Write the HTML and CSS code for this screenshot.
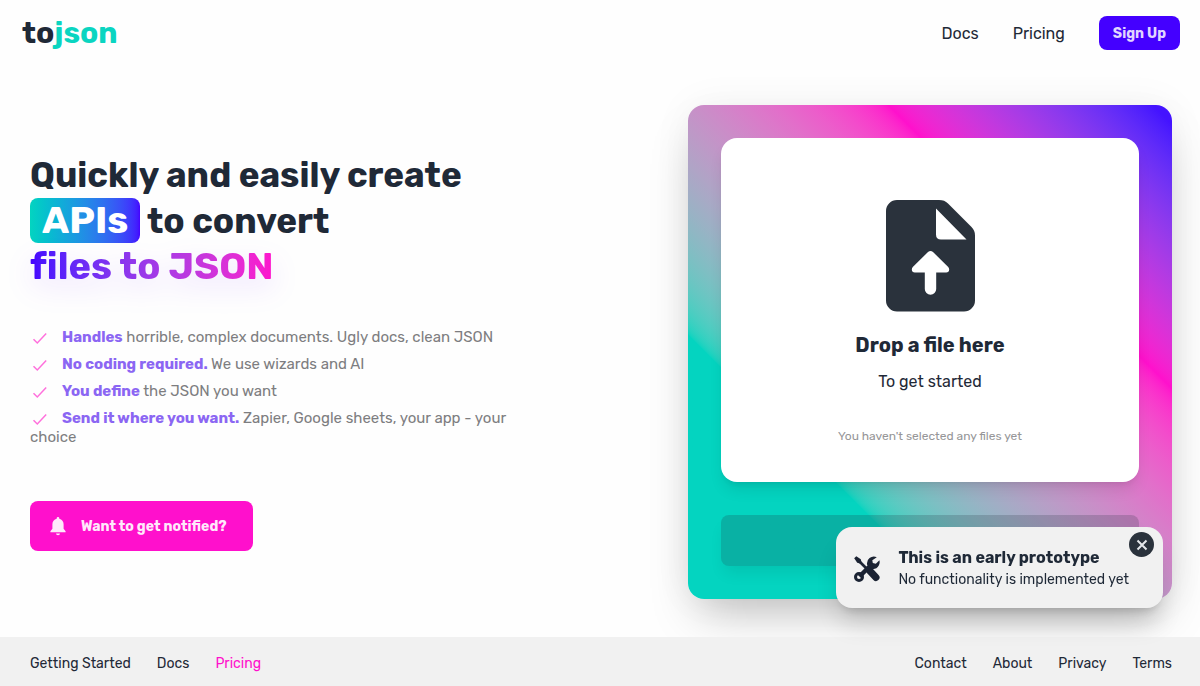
FILE: index.html
```html
<!DOCTYPE html>
<html lang="en">
<head>
<meta charset="utf-8">
<meta name="viewport" content="width=device-width, initial-scale=1">
<title>tojson</title>
<link rel="stylesheet" href="styles.css">
</head>
<body>
<header class="navbar">
  <a class="logo" href="#">to<span class="logo-accent">json</span></a>
  <nav class="nav-links">
    <a href="#">Docs</a>
    <a href="#">Pricing</a>
    <button class="signup" type="button">Sign Up</button>
  </nav>
</header>
<main class="hero">
  <section class="intro">
    <h1 class="headline">Quickly and easily create<br><span class="badge">APIs</span> to convert<br><span class="gradient-text">files to JSON</span></h1>
    <ul class="features">
      <li><svg class="check" viewBox="0 0 16 16"><path d="M1.5 9.2 5.3 13 14.2 3.6"/></svg><strong>Handles</strong> horrible, complex documents. Ugly docs, clean JSON</li>
      <li><svg class="check" viewBox="0 0 16 16"><path d="M1.5 9.2 5.3 13 14.2 3.6"/></svg><strong>No coding required.</strong> We use wizards and AI</li>
      <li><svg class="check" viewBox="0 0 16 16"><path d="M1.5 9.2 5.3 13 14.2 3.6"/></svg><strong>You define</strong> the JSON you want</li>
      <li><svg class="check" viewBox="0 0 16 16"><path d="M1.5 9.2 5.3 13 14.2 3.6"/></svg><strong>Send it where you want.</strong> Zapier, Google sheets, your app - your choice</li>
    </ul>
    <button class="notify" type="button">
      <svg class="bell" viewBox="0 0 16 19"><path d="M8 0c.8 0 1.300.6 1.300 1.300v.5c2.600.6 4.300 2.800 4.300 5.500v4.500l2 2.400v1.100H.4v-1.100l2-2.400V7.300c0-2.700 1.700-4.900 4.300-5.500v-.5C6.700.6 7.200 0 8 0zM6 16.500h4a2 1.800 0 0 1-4 0z"/></svg>
      Want to get notified?
    </button>
  </section>
  <section class="panel">
    <div class="dropzone">
      <svg class="file-icon" viewBox="0 0 89 112"><path fill-rule="evenodd" d="M11 0h42c4 0 6.500 1 9 3.500l23.500 23.500c2.500 2.500 3.500 5 3.500 8.500V100.500a11 11 0 0 1-11 11H11a11 11 0 0 1-11-11V11A11 11 0 0 1 11 0zM50 8.500V34.500q0 5 5 5H80.500zM42 52 26.800 67c-2 2-.8 5.500 2 5.500h10v16.500a5.700 5.700 0 0 0 11.400 0V72.500h10c2.800 0 4-3.500 2-5.500L47 52q-2.500-2.200-5 0z"/></svg>
      <h2 class="drop-title">Drop a file here</h2>
      <p class="drop-sub">To get started</p>
      <p class="drop-status">You haven't selected any files yet</p>
    </div>
    <button class="submit" type="button" disabled aria-label="Convert"></button>
  </section>
</main>
<aside class="toast">
  <svg class="tools" viewBox="0 0 26 26"><path d="M3 3 19 19" stroke-width="2.600"/><path d="M.2 2.300 2.300.2 6.800 3.200 7.400 6 6 7.400 3.200 6.800z" class="solid"/><path d="M15.500 14.500 22 21.500" stroke-width="7" stroke-linecap="round"/><path d="M5.500 20.500 18 8" stroke-width="4.500"/><circle cx="5" cy="21" r="3.500" stroke-width="3"/><path d="M22.800 1.300A6.800 6.800 0 0 0 13.200 9l4 4A7 7 0 0 0 25.400 4.300L21.800 7.700 18.800 7.100 18.300 4.300z" class="solid"/></svg>
  <div>
    <strong class="toast-title">This is an early prototype</strong>
    <p class="toast-text">No functionality is implemented yet</p>
  </div>
  <button class="close" type="button" aria-label="Close"><svg viewBox="0 0 12 12"><path d="M1.500 1.500 10.500 10.500M10.500 1.500 1.500 10.500"/></svg></button>
</aside>
<footer class="footer">
  <nav class="footer-links"><a href="#">Getting Started</a><a href="#">Docs</a><a class="active" href="#">Pricing</a></nav>
  <nav class="footer-links"><a href="#">Contact</a><a href="#">About</a><a href="#">Privacy</a><a href="#">Terms</a></nav>
</footer>
</body>
</html>
```
FILE: styles.css
```css
* { box-sizing: border-box; }
body {
  margin: 0;
  min-height: 100vh;
  display: flex;
  flex-direction: column;
  font-family: Rubik, Roboto, "Liberation Sans", sans-serif;
  font-size: 16px;
  color: #1f2937;
  background: #fefefe;
}
a { color: inherit; text-decoration: none; }
button { font: inherit; border: 0; cursor: pointer; }
h1, h2, p, ul { margin: 0; padding: 0; }

.navbar {
  display: flex;
  align-items: center;
  justify-content: space-between;
  padding: 16px 20px 16px 22px;
}
.logo { font-size: 30px; line-height: 34px; font-weight: 700; }
.logo-accent { color: #0ad5c1; }
.nav-links { display: flex; align-items: center; gap: 34px; font-size: 16px; }
.signup {
  height: 34px;
  padding: 0 14px;
  border-radius: 8px;
  background: #4400ff;
  color: #e0d6ff;
  font-size: 14px;
  font-weight: 700;
}

.hero {
  flex: 1;
  display: grid;
  grid-template-columns: minmax(0, 500px) minmax(0, 484px);
  justify-content: space-between;
  align-items: center;
  padding: 39px 28px 38px 30px;
}
.headline { font-size: 35px; line-height: 45px; font-weight: 700; }
.badge {
  display: inline-block;
  padding: 0 12px;
  border-radius: 8px;
  color: #fff;
  font-size: 38px;
  background: linear-gradient(90deg in oklab, #04d4c0, #4400ff);
}
.gradient-text {
  display: inline-block;
  color: transparent;
  font-size: 38px;
  font-variant-ligatures: none;
  background: linear-gradient(90deg in oklab, #4400ff, #ff10cc);
  background-clip: text;
  -webkit-background-clip: text;
  filter: drop-shadow(0 10px 14px rgba(100, 0, 255, 0.12));
}
.features { margin-top: 38px; list-style: none; font-size: 15px; line-height: 19px; color: #7d7d80; }
.features li { margin-bottom: 8px; }
.features strong { color: #8b66f3; font-weight: 700; }
.check {
  width: 16px;
  height: 16px;
  margin: 0 14px 0 2px;
  vertical-align: -4px;
  fill: none;
  stroke: #ff70dc;
  stroke-width: 1.500;
}
.notify {
  display: flex;
  align-items: center;
  gap: 15px;
  height: 50px;
  margin-top: 54px;
  padding: 0 26px 0 20px;
  border-radius: 8px;
  background: #ff10cc;
  color: #ffe9fb;
  font-size: 14px;
  font-weight: 700;
}
.bell { width: 16px; height: 19px; fill: currentColor; }

.panel {
  display: flex;
  flex-direction: column;
  gap: 33px;
  padding: 33px;
  border-radius: 16px;
  background: linear-gradient(45deg in oklab, #04d4c0 27%, #ff10cc 71%, #4413ff 98%);
  box-shadow: 0 24px 48px -12px rgba(0, 0, 0, 0.25), 0 0 40px rgba(0, 0, 0, 0.05);
}
.dropzone {
  display: flex;
  flex-direction: column;
  align-items: center;
  padding: 62px 24px 38px;
  border-radius: 16px;
  background: #fff;
  box-shadow: 0 10px 15px -3px rgba(0, 0, 0, 0.1), 0 4px 6px -4px rgba(0, 0, 0, 0.1);
}
.file-icon { width: 89px; height: 112px; fill: #2a323c; }
.drop-title { margin-top: 20px; font-size: 20px; line-height: 26px; font-weight: 700; }
.drop-sub { margin-top: 14px; font-size: 16px; line-height: 20px; }
.drop-status { margin-top: 36px; font-size: 12px; line-height: 16px; color: #969698; }
.submit {
  height: 51px;
  border-radius: 8px;
  background: rgba(31, 41, 55, 0.2);
  box-shadow: 0 10px 15px -3px rgba(0, 0, 0, 0.08);
}

.toast {
  position: fixed;
  z-index: 2;
  right: 37px;
  bottom: 78px;
  display: flex;
  align-items: center;
  gap: 18px;
  padding: 20px 34px 18px 18px;
  border-radius: 16px;
  background: #f1f1f1;
  box-shadow: 0 20px 25px -5px rgba(0, 0, 0, 0.15), 0 8px 10px -6px rgba(0, 0, 0, 0.15);
}
.tools { width: 26px; height: 26px; fill: none; stroke: #1b2333; }
.tools .solid { fill: #1b2333; stroke: none; }
.toast-title { display: block; font-size: 16px; line-height: 22px; font-weight: 700; }
.toast-text { font-size: 14px; line-height: 21px; }
.close {
  position: absolute;
  top: 5px;
  right: 9px;
  display: grid;
  place-items: center;
  width: 25px;
  height: 25px;
  padding: 0;
  border-radius: 50%;
  background: #2a323c;
}
.close svg { width: 12px; height: 12px; fill: none; stroke: #e5e7eb; stroke-width: 2; }

.footer {
  position: relative;
  z-index: 1;
  display: flex;
  justify-content: space-between;
  padding: 18px 28px 13px 30px;
  background: #f1f1f1;
  font-size: 14px;
  line-height: 18px;
}
.footer-links { display: flex; gap: 26px; }
.footer-links .active { color: #ff10cc; }
```
